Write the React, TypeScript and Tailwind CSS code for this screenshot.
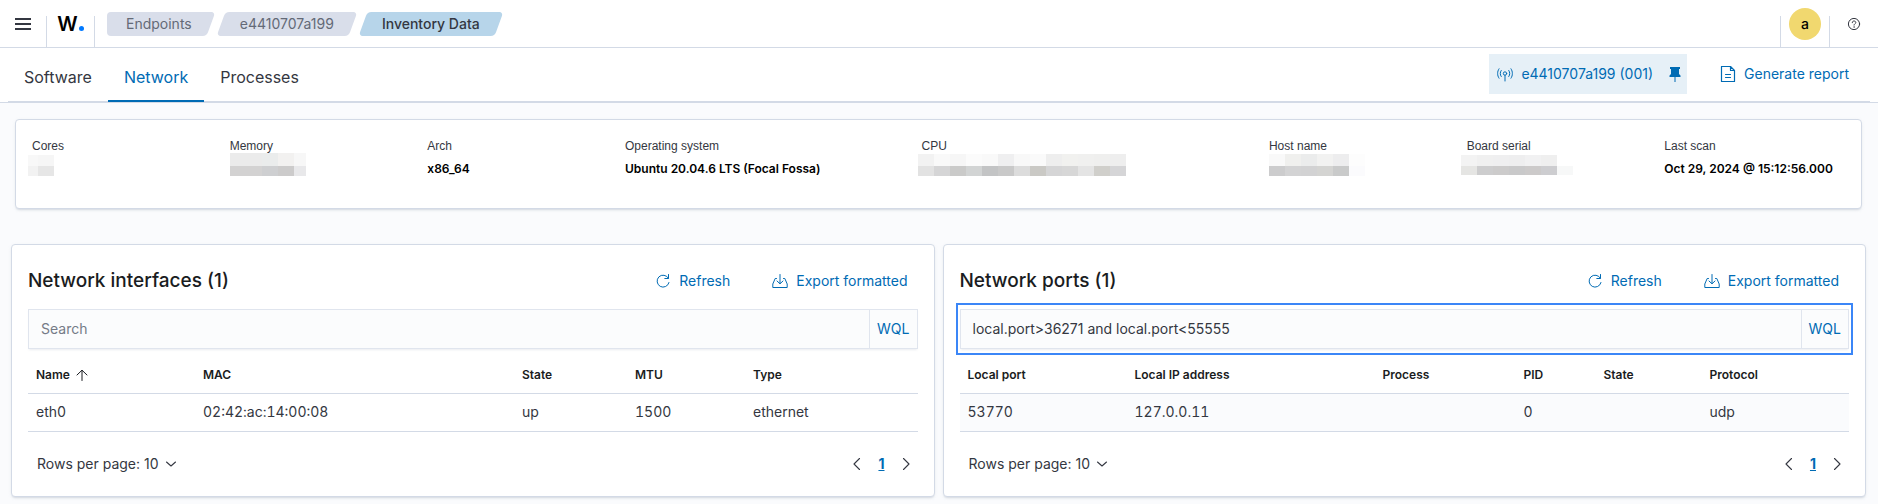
import React from "react";

type Cell = [x: number, y: number, w: number, h: number, fill: string];

const row = (x: number, y: number, h: number, colors: string[]): Cell[] =>
  colors.map((c, i) => [x + i * 16, y, 16, h, c]);

const MASK_CORES: Cell[] = [
  [-4, 2, 10, 11, "#f8f8f8"],
  [6, 2, 16, 11, "#f6f6f6"],
  [-4, 13, 10, 10, "#f2f2f2"],
  [6, 13, 16, 10, "#e6e6e6"],
];
const MASK_MEMORY: Cell[] = [
  [0, 0, 32, 13, "#ebebeb"],
  [32, 0, 16, 13, "#eaecec"],
  [48, 0, 16, 13, "#f2f1f0"],
  [64, 0, 12, 13, "#f7f7f7"],
  [0, 13, 32, 10, "#d3d2d2"],
  [32, 13, 16, 10, "#cecfd1"],
  [48, 13, 16, 10, "#cccbcb"],
  [64, 13, 12, 10, "#e8e8ea"],
];
const MASK_CPU: Cell[] = [
  ...row(-4, 1, 12, ["#f2f2f2", "#f9f9f9", "#f6f6f6", "#fbfbfb", "#f9f9f9", "#efeff0", "#f8f8f8", "#fafafa", "#eeeeee", "#f1f1ef", "#f0f0ef", "#efefee", "#eeeeee"]),
  ...row(-4, 13, 10, ["#e2e2e2", "#d5d5d6", "#cacac9", "#d2d4d4", "#c3c4c5", "#c9c9c9", "#dcdcdc", "#cac9c5", "#d5d5d6", "#d7d7d7", "#e4e4e4", "#d0cfcb", "#d5d5d7"]),
];
const MASK_HOST: Cell[] = [
  ...row(0, 1, 12, ["#f9f9f9", "#f0f0ee", "#ebecec", "#f2f2f1", "#ededee", "#fdfdfd"]),
  ...row(0, 13, 10, ["#cccccd", "#d3d3d4", "#d2d2d3", "#d4d4d2", "#c9caca", "#fbfbfd"]),
];
const MASK_BOARD: Cell[] = [
  ...row(-6, 2, 11, ["#f3f3f3", "#f0f0f0", "#efeff0", "#eeeeef", "#f1f1f2", "#efefef"]),
  ...row(-6, 13, 9, ["#e5e5e3", "#cdcdce", "#cccbcb", "#c9c9ca", "#cccaca", "#cdcdd0", "#f7f8f8"]),
];

function Mask({ cells }: { cells: Cell[] }) {
  return (
    <svg className="block overflow-visible" width="80" height="24" viewBox="0 2 80 24" shapeRendering="crispEdges" aria-hidden="true">
      {cells.map(([x, y, w, h, fill], i) => (
        <rect key={i} x={x} y={y} width={w} height={h} fill={fill} />
      ))}
    </svg>
  );
}

const facts: { label: string; value?: string; mask?: Cell[] }[] = [
  { label: "Cores", mask: MASK_CORES },
  { label: "Memory", mask: MASK_MEMORY },
  { label: "Arch", value: "x86_64" },
  { label: "Operating system", value: "Ubuntu 20.04.6 LTS (Focal Fossa)" },
  { label: "CPU", mask: MASK_CPU },
  { label: "Host name", mask: MASK_HOST },
  { label: "Board serial", mask: MASK_BOARD },
  { label: "Last scan", value: "Oct 29, 2024 @ 15:12:56.000" },
];

const stroke = { fill: "none", stroke: "currentColor", strokeLinecap: "round", strokeLinejoin: "round" } as const;

function MenuIcon() {
  return (
    <svg width="16" height="16" viewBox="0 0 16 16" fill="currentColor" shapeRendering="crispEdges" aria-hidden="true">
      <path d="M0 2h16v2H0zM0 7h16v2H0zM0 12h16v2H0z" />
    </svg>
  );
}
function HelpIcon() {
  return (
    <svg width="14" height="14" viewBox="0 0 14 14" {...stroke} aria-hidden="true">
      <circle cx="7" cy="7" r="5.6" />
      <path d="M5.300 5.700C5.300 4.600 6 4 7 4s1.800.6 1.800 1.600C8.800 6.700 7 6.800 7 8.100" />
      <circle cx="7" cy="10" r=".35" fill="currentColor" strokeWidth=".5" />
    </svg>
  );
}
function AntennaIcon() {
  return (
    <svg width="16" height="16" viewBox="0 0 16 16" {...stroke} aria-hidden="true">
      <circle cx="8" cy="7.500" r="1.700" />
      <path d="M8 9.500V15" />
      <path d="M4.200 4.500C2.900 6.300 2.900 8.700 4.200 10.500M11.800 4.500C13.100 6.300 13.100 8.700 11.800 10.500M2 2.800C.1 5.600.1 9.400 2 12.200M14 2.800C15.900 5.600 15.900 9.400 14 12.200" />
    </svg>
  );
}
function PinIcon() {
  return (
    <svg width="16" height="16" viewBox="0 0 16 16" fill="currentColor" aria-hidden="true">
      <path d="M3 1h10v2h-1v5l1.500 1.500V11h-5v5h-1v-5h-5V9.500L4 8V3H3z" />
    </svg>
  );
}
function ReportIcon() {
  return (
    <svg width="16" height="16" viewBox="0 0 16 16" {...stroke} aria-hidden="true">
      <path d="M1.500.5h9l4 4v11h-13zM10.500.5v4h4M5.500 8.500h5M5.500 11.500h5" strokeWidth="1.200" />
    </svg>
  );
}
function RefreshIcon() {
  return (
    <svg width="16" height="16" viewBox="0 0 16 16" {...stroke} aria-hidden="true">
      <path d="M13.400 5.200A6 6 0 1 0 14 9.500M13.500 1.500v4H9.800" />
    </svg>
  );
}
function ExportIcon() {
  return (
    <svg width="16" height="16" viewBox="0 0 16 16" {...stroke} aria-hidden="true">
      <path d="M8 1.500v9M5 8l3 2.800L11 8M4.500 5.500H3.200L.8 11v3.500h14.400V11l-2.400-5.500h-1.300" />
    </svg>
  );
}
function ArrowUpIcon() {
  return (
    <svg width="12" height="12" viewBox="0 0 12 12" {...stroke} aria-hidden="true">
      <path d="M6 11.500V1.500M1 6l5-4.800L11 6" />
    </svg>
  );
}
function ChevronIcon({ d }: { d: string }) {
  return (
    <svg width="16" height="16" viewBox="0 0 16 16" {...stroke} aria-hidden="true">
      <path d={d} strokeWidth="1.100" />
    </svg>
  );
}

function Crumb({ children, first, active }: { children: string; first?: boolean; active?: boolean }) {
  const bg = active ? "bg-[#b7d5ea]" : "bg-[#d9deea]";
  return (
    <li className="relative">
      {first && <span className={`absolute inset-y-0 left-0 w-1/2 rounded-l ${bg}`} />}
      <span className={`absolute inset-y-0 right-0 -skew-x-[20deg] rounded ${bg} ${first ? "left-2" : "left-0"}`} />
      <a
        href="#"
        aria-current={active ? "page" : undefined}
        className={`relative block px-[19px] text-sm leading-6 ${active ? "font-medium text-[#343741]" : "text-[#646a77]"}`}
      >
        {children}
      </a>
    </li>
  );
}

function ActionButton({ icon, children }: { icon: React.ReactNode; children: string }) {
  return (
    <button type="button" className="flex h-10 items-center gap-2 px-2.5 text-sm text-[#006bb4]">
      {icon}
      {children}
    </button>
  );
}

type Column = { name: string; width: string; sorted?: boolean };

interface PanelProps {
  id: string;
  title: string;
  query?: string;
  highlighted?: boolean;
  striped?: boolean;
  columns: Column[];
  values: string[];
}

function Panel({ id, title, query, highlighted, striped, columns, values }: PanelProps) {
  return (
    <section className="min-w-0 flex-1 rounded border border-[#d3dae6] bg-white px-4 pt-4 pb-3 shadow-[0_2px_2px_-1px_rgba(152,162,179,0.3),0_1px_5px_-2px_rgba(152,162,179,0.3)]">
      <header className="flex items-center justify-between">
        <h2 className="text-[19px] leading-7 font-medium text-[#1a1c21]">{title}</h2>
        <div className="flex gap-[22px]">
          <ActionButton icon={<RefreshIcon />}>Refresh</ActionButton>
          <ActionButton icon={<ExportIcon />}>Export formatted</ActionButton>
        </div>
      </header>

      <div className="relative mt-2 flex h-10 border border-[#e0e5ee] bg-[#fbfcfd] shadow-[0_2px_2px_-1px_rgba(152,162,179,0.2)]">
        <input
          id={id}
          type="text"
          aria-label={`Search ${title}`}
          placeholder="Search"
          defaultValue={query}
          className="min-w-0 flex-1 bg-transparent px-3 text-sm text-[#343741] outline-none placeholder:text-[#757b87]"
        />
        <button type="button" className="border-l border-[#e0e5ee] px-[7px] text-sm text-[#006bb4]">WQL</button>
        {highlighted && (
          <span className="pointer-events-none absolute -inset-x-[5px] -inset-y-[7px] border-2 border-[#3b86f7]" />
        )}
      </div>

      <table className="mt-2 w-full table-fixed border-collapse text-left">
        <thead>
          <tr className="h-9 border-b border-[#d3dae6]">
            {columns.map((c) => (
              <th key={c.name} scope="col" className={`px-2 text-xs font-semibold text-[#1a1c21] ${c.width}`}>
                {c.sorted ? (
                  <button type="button" className="flex items-center gap-1.5">
                    {c.name}
                    <ArrowUpIcon />
                  </button>
                ) : (
                  c.name
                )}
              </th>
            ))}
          </tr>
        </thead>
        <tbody>
          <tr className={`h-[38px] border-b border-[#d3dae6] ${striped ? "bg-[#fafbfd]" : ""}`}>
            {values.map((v, i) => (
              <td key={i} className="px-2 text-sm tabular-nums text-[#343741]">{v}</td>
            ))}
          </tr>
        </tbody>
      </table>

      <footer className="mt-3 flex items-center justify-between pr-1 pl-[9px]">
        <button type="button" className="flex h-10 items-center gap-1 text-sm text-[#343741]">
          Rows per page: 10
          <ChevronIcon d="M3.500 6L8 10l4.500-4" />
        </button>
        <nav aria-label={`${title} pages`} className="flex items-center gap-[13px] text-[#343741]">
          <button type="button" aria-label="Previous page"><ChevronIcon d="M10.500 2.500L5 8l5.500 5.500" /></button>
          <button type="button" aria-current="page" className="text-sm font-bold text-[#006bb4] underline">1</button>
          <button type="button" aria-label="Next page"><ChevronIcon d="M5.500 2.500L11 8l-5.500 5.500" /></button>
        </nav>
      </footer>
    </section>
  );
}

export default function App() {
  return (
    <div className="min-h-screen bg-[#fafbfd] font-[Inter,sans-serif] text-[#343741]">
      <header className="flex h-12 items-center border-b border-[#d3dae6] bg-white">
        <button type="button" aria-label="Menu" className="px-[15px]"><MenuIcon /></button>
        <span className="mt-4 h-8 border-l border-[#d3dae6]" />
        <a href="#" aria-label="Home" className="flex w-[47px] items-baseline justify-center text-xl font-semibold text-black">
          W<span className="ml-px size-[5px] rounded-full bg-[#0079ff]" />
        </a>
        <span className="mt-4 h-8 border-l border-[#d3dae6]" />
        <nav aria-label="Breadcrumbs" className="ml-3">
          <ol className="flex gap-2.5">
            <Crumb first>Endpoints</Crumb>
            <Crumb>e4410707a199</Crumb>
            <Crumb active>Inventory Data</Crumb>
          </ol>
        </nav>
        <div className="ml-auto flex items-center">
          <span className="mt-4 h-8 border-l border-[#d3dae6]" />
          <button type="button" className="mx-2 size-8 rounded-full bg-[#f1d86f] text-sm font-medium text-black">a</button>
          <span className="mt-4 h-8 border-l border-[#d3dae6]" />
          <button type="button" aria-label="Help" className="px-[17px]"><HelpIcon /></button>
        </div>
      </header>

      <div className="border-b border-[#d3dae6] bg-white px-2">
        <div className="flex items-end border-b border-[#d3dae6]">
          <nav aria-label="Inventory" className="flex">
            <a href="#" className="px-4 pt-[17px] pb-[11px] text-base">Software</a>
            <a href="#" aria-current="page" className="-mb-px border-b-2 border-[#006bb4] px-4 pt-[17px] pb-[11px] text-base text-[#006bb4]">Network</a>
            <a href="#" className="px-4 pt-[17px] pb-[11px] text-base">Processes</a>
          </nav>
          <div className="ml-auto flex items-center gap-[23px] pr-[11px] pb-[7px]">
            <div className="flex h-10 items-center bg-[#e6f0f7] pr-1 pl-2 text-[#006bb4]">
              <button type="button" className="flex items-center gap-2 text-sm"><AntennaIcon />e4410707a199 (001)</button>
              <button type="button" aria-label="Unpin agent" className="ml-3.5"><PinIcon /></button>
            </div>
            <ActionButton icon={<ReportIcon />}>Generate report</ActionButton>
          </div>
        </div>
      </div>

      <main>
        <dl className="mt-4 mr-4 ml-[15px] grid h-[90px] grid-cols-[198fr_198fr_198fr_297fr_348fr_198fr_198fr_181fr] rounded border border-[#d3dae6] bg-white px-4 pt-[17px] shadow-[0_2px_2px_-1px_rgba(152,162,179,0.3),0_1px_5px_-2px_rgba(152,162,179,0.3)]">
          {facts.map((f) => (
            <div key={f.label}>
              <dt className="font-['Liberation_Sans',sans-serif] text-xs leading-[18px]">{f.label}</dt>
              <dd className="text-xs leading-7 font-semibold whitespace-nowrap text-black">
                {f.value ?? <Mask cells={f.mask ?? []} />}
              </dd>
            </div>
          ))}
        </dl>

        <div className="mt-[35px] flex gap-2 pr-3 pl-[11px]">
          <Panel
            id="interfaces-search"
            title="Network interfaces (1)"
            columns={[
              { name: "Name", width: "w-[167px]", sorted: true },
              { name: "MAC", width: "w-[319px]" },
              { name: "State", width: "w-[113px]" },
              { name: "MTU", width: "w-[118px]" },
              { name: "Type", width: "w-auto" },
            ]}
            values={["eth0", "02:42:ac:14:00:08", "up", "1500", "ethernet"]}
          />
          <Panel
            id="ports-search"
            title="Network ports (1)"
            query="local.port>36271 and local.port<55555"
            highlighted
            striped
            columns={[
              { name: "Local port", width: "w-[167px]" },
              { name: "Local IP address", width: "w-[248px]" },
              { name: "Process", width: "w-[141px]" },
              { name: "PID", width: "w-[80px]" },
              { name: "State", width: "w-[106px]" },
              { name: "Protocol", width: "w-auto" },
            ]}
            values={["53770", "127.0.0.11", "", "0", "", "udp"]}
          />
        </div>
      </main>
    </div>
  );
}
